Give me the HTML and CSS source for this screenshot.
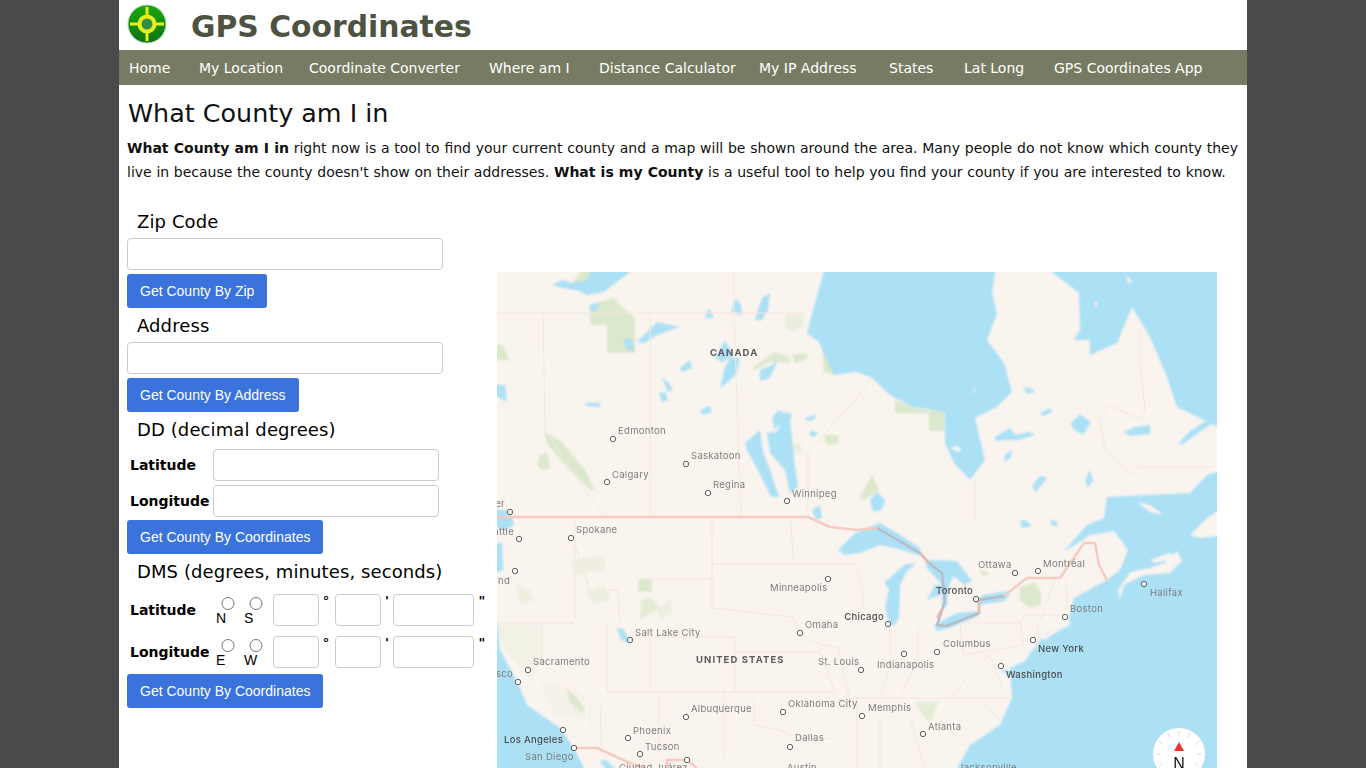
FILE: index.html
```html
<!DOCTYPE html>
<html>
<head>
    <meta charset="utf-8">
    <title>What County am I in</title>
    <link rel="stylesheet" href="styles.css">
</head>
<body>
<div class="page">
    <div class="top">
        <svg class="logo" width="40" height="40" viewBox="0 0 40 40">
            <defs>
                <linearGradient id="logo_grad" x1="0" y1="0" x2="0" y2="1">
                    <stop offset="0" stop-color="#1aa80e"/>
                    <stop offset="1" stop-color="#0a7412"/>
                </linearGradient>
            </defs>
            <circle cx="20" cy="20" r="19" fill="url(#logo_grad)" stroke="#b9d3b0" stroke-width="1"/>
            <path d="M20 3V37M3 20H37" stroke="#e8ee1c" stroke-width="3"/>
            <circle cx="20" cy="20" r="7.5" fill="#2f8f45" stroke="#e8ee1c" stroke-width="4"/>
        </svg>
        <div class="brand">GPS Coordinates</div>
    </div>
    <div class="nav">
        <a>Home</a>
        <a>My Location</a>
        <a>Coordinate Converter</a>
        <a>Where am I</a>
        <a>Distance Calculator</a>
        <a>My IP Address</a>
        <a>States</a>
        <a>Lat Long</a>
        <a>GPS Coordinates App</a>
    </div>
    <div class="content">
        <h1>What County am I in</h1>
        <p><b>What County am I in</b> right now is a tool to find your current county and a map will be shown around the area. Many people do not know which county they live in because the county doesn't show on their addresses. <b>What is my County</b> is a useful tool to help you find your county if you are interested to know.</p>
        <div class="tool">
            <div class="form">
                <div class="head">Zip Code</div>
                <input class="wide" type="text">
                <button>Get County By Zip</button>
                <div class="head">Address</div>
                <input class="wide" type="text">
                <button>Get County By Address</button>
                <div class="head">DD (decimal degrees)</div>
                <div class="dd first">
                    <b>Latitude</b>
                    <input type="text">
                </div>
                <div class="dd">
                    <b>Longitude</b>
                    <input type="text">
                </div>
                <button class="after_dd">Get County By Coordinates</button>
                <div class="head">DMS (degrees, minutes, seconds)</div>
                <div class="dms first">
                    <b>Latitude</b>
                    <label><input type="radio" name="lat">N</label>
                    <label><input type="radio" name="lat">S</label>
                    <input class="deg" type="text"><i>°</i>
                    <input class="min" type="text"><i>'</i>
                    <input class="sec" type="text"><i>"</i>
                </div>
                <div class="dms">
                    <b>Longitude</b>
                    <label><input type="radio" name="lng">E</label>
                    <label><input type="radio" name="lng">W</label>
                    <input class="deg" type="text"><i>°</i>
                    <input class="min" type="text"><i>'</i>
                    <input class="sec" type="text"><i>"</i>
                </div>
                <button class="after_dms">Get County By Coordinates</button>
            </div>
            <svg class="map" width="720" height="496" viewBox="497 272 720 496">
                <defs>
                    <filter id="soft" filterUnits="userSpaceOnUse" x="480" y="255" width="760" height="530">
                        <feGaussianBlur stdDeviation="0.8"/>
                    </filter>
                </defs>
                <rect x="497" y="272" width="720" height="496" fill="#faf4ef"/>

                <!-- parks -->
                <g fill="#dbe8cc" filter="url(#soft)">
                    <path d="M590 305L614 298L620 305L635 318V353H607V325H590Z"/>
                    <path d="M570 287L585 265H600V272L590 280L575 290Z"/>
                    <path d="M489 345H503L509 360H489Z"/>
                    <path d="M544 432L560 440L585 470L595 490L590 490L570 470L548 445Z"/>
                    <path d="M540 455L547 452L550 468L542 470L537 465Z"/>
                    <path d="M752 368L775 352L790 358L790 362L770 362L755 370Z"/>
                    <path d="M792 355L808 353L806 360L795 363Z"/>
                    <path d="M822 342L832 345L836 375L824 372Z"/>
                    <path d="M785 315L803 313L803 325L795 332L785 328Z" opacity=".5"/>
                    <path d="M782 445L800 443L802 452L787 454Z" opacity=".5"/>
                    <path d="M825 435L838 435L838 443L830 445L824 442Z"/>
                    <path d="M895 400L912 407L925 410H945V431H929V413H895Z"/>
                    <path d="M859 498L872 475L879 490L865 500Z"/>
                    <path d="M1020 587L1035 582L1041 592V605L1030 608L1020 600Z"/>
                    <path d="M978 570L990 572L986 576L982 575Z"/>
                    <path d="M638 579H652V592H638Z"/>
                    <path d="M641 600L650 597L662 610L652 612L640 620Z" opacity=".7"/>
                    <path d="M567 690L575 695L586 710L580 712L570 702Z"/>
                    <path d="M516 585L530 590L535 600L520 605Z" opacity=".4"/>
                    <path d="M585 592L605 585L610 600L595 605Z" opacity=".4"/>
                    <path d="M570 560L605 555L605 570L575 575Z" opacity=".4"/>
                    <path d="M497 625H543V660L530 680L505 650Z" opacity=".25"/>
                    <path d="M540 680L570 690L590 720L555 715Z" opacity=".2"/>
                    <path d="M658 610L670 598L672 612L660 620Z" opacity=".4"/>
                    <path d="M915 702H938L930 724L920 712Z" opacity=".7"/>
                </g>

                <!-- water -->
                <g fill="#ace0f5" filter="url(#soft)">
                    <path d="M826 265L824 272L812 313L807 333L819 342L834 375L857 372L872 378L890 395L912 407L945 412V443L954 463L970 480L985 460L975 418L997 407L1012 392L1004 363L987 340L997 313L992 293L995 272L996 265Z"/>
                    <path d="M1046 265L1052 272L1079 293L1080 330L1074 340L1090 340L1090 355L1117 343L1132 307L1150 337L1167 377L1177 407L1210 423L1225 431V265Z"/>
                    <path d="M1064 551L1087 525L1104 518L1107 497L1190 493L1207 475L1225 470V776H952L957 768L970 745L1000 725L1012 698L1010 668L1025 661L1044 635L1070 625L1069 618L1074 598L1107 580L1120 570L1128 550L1114 531L1090 535L1075 545Z"/>
                    <path d="M489 621H497L500 650L517 681L527 705L560 728L574 748L584 768L588 776H489Z"/>
                    <path d="M600 761L610 776H622L606 760Z"/>
                    <path d="M489 543H502L503 570L489 575Z"/>
                    <path d="M489 510H510L514 525L505 530L489 525Z"/>
                    <path d="M552 285L562 280L572 283L587 280L594 265H635L630 272L604 292L587 295L577 290L562 288Z"/>
                    <path d="M637 342L657 322L680 327L657 335L644 343Z"/>
                    <path d="M590 305L600 303L596 312L590 310Z"/>
                    <path d="M625 338L632 340L634 350L628 350L624 343Z"/>
                    <path d="M705 318L709 308L714 318Z"/>
                    <path d="M731 312L735 298L741 305L742 315Z"/>
                    <path d="M755 320L762 298L770 293L768 310L762 320Z"/>
                    <path d="M715 358L725 340L733 355L722 362Z"/>
                    <path d="M720 388L724 370L730 357L740 358L737 373L727 383Z"/>
                    <path d="M680 368L690 360L692 368L682 372Z"/>
                    <path d="M662 378L668 382L673 390L668 392Z"/>
                    <path d="M659 393L665 392L668 400L662 402Z"/>
                    <path d="M700 410L710 406L712 412L703 415Z"/>
                    <path d="M584 403L600 403L600 407L588 406Z"/>
                    <path d="M489 385H505L507 402L489 392Z"/>
                    <path d="M777 432L785 412L792 414L790 420L795 467L798 487L790 493L785 470L770 453L767 433Z"/>
                    <path d="M745 443L760 430L763 452L770 470L779 497L771 497L758 470L747 450Z"/>
                    <path d="M772 418L778 410L790 415L783 420L775 430Z"/>
                    <path d="M760 370L772 365L778 360L770 378L760 381Z"/>
                    <path d="M805 418L816 414L814 420L807 421Z"/>
                    <path d="M810 431L818 432L815 437L810 436Z"/>
                    <path d="M812 510L820 505L822 518L816 520Z"/>
                    <path d="M1023 388L1030 387L1035 392L1028 394Z"/>
                    <path d="M1040 413L1050 408L1052 412L1043 416Z"/>
                    <path d="M995 437L1010 428L1015 435L1030 432L1035 435L1018 440L1005 440L996 441Z"/>
                    <path d="M1005 455L1012 450L1011 458L1004 462Z"/>
                    <path d="M1070 424L1080 414L1091 422L1083 435L1075 430Z"/>
                    <path d="M1123 432L1135 427L1150 425L1150 434L1130 436Z"/>
                    <path d="M1179 443L1190 431L1206 421L1212 424L1198 433L1182 445Z"/>
                    <path d="M1085 480L1090 470L1093 480L1088 488Z"/>
                    <path d="M1032 486L1040 476L1047 478L1036 492Z"/>
                    <path d="M870 500L877 492L885 500L882 510L873 512Z"/>
                    <path d="M838 550L855 533L870 527L880 523L900 535L920 548L921 556L895 548L880 545L860 553L845 555Z"/>
                    <path d="M889 623L885 608L889 588L884 583L904 565L917 563L907 571L900 585L899 618L894 626Z"/>
                    <path d="M925 560L957 561L972 581L964 585L954 576L949 585L947 606L942 608L942 585L927 568Z"/>
                    <path d="M927 600L935 585L945 585L940 595Z"/>
                    <path d="M934 625L957 613L980 611L978 616L950 628L937 631Z"/>
                    <path d="M972 601L984 595L1007 591L1010 595L1004 601L980 605Z"/>
                    <path d="M617 628L623 629L630 640L628 643L621 640Z"/>
                    <path d="M1024 664L1032 650L1035 655L1028 670Z"/>
                    <path d="M1000 668L1008 676L1012 672Z"/>
                    <path d="M1020 521L1025 520L1032 526L1022 528Z"/>
                    <path d="M1050 521L1056 520L1058 526L1052 526Z"/>
                </g>

                <!-- islands -->
                <g fill="#faf4ef" filter="url(#soft)">
                    <path d="M1120 600L1124 585L1144 575L1170 573L1182 561L1177 551L1164 563L1150 568L1130 572L1118 590Z"/>
                    <path d="M1190 535L1205 520L1225 505V535L1200 538Z"/>
                    <path d="M1137 502L1150 505L1164 515L1150 512Z"/>
                    <path d="M1150 560L1170 553L1175 558L1155 563Z"/>
                    <path d="M1040 636L1070 624L1060 630L1044 640Z"/>
                    <path d="M950 447L958 446L962 452L955 451Z"/>
                    <path d="M1094 303L1098 301L1096 308Z"/>
                    <path d="M1126 277L1130 278L1132 284L1128 282Z"/>
                    <path d="M973 390L977 385L972 395Z"/>
                </g>

                <!-- boundaries -->
                <g fill="none" stroke="#f5e6dc" stroke-width="1">
                    <path d="M497 313H805"/>
                    <path d="M543 313L545 430L585 490L605 515"/>
                    <path d="M650 313V517"/>
                    <path d="M734 272L734 313L741 517"/>
                    <path d="M808 517V452L857 398L872 378"/>
                    <path d="M975 480V520"/>
                    <path d="M1140 467H1212"/>
                    <path d="M1140 330L1140 360L1145 410L1140 420L1110 405L1100 420L1105 450L1130 475L1145 460"/>
                    <path d="M575 518L575 620"/>
                    <path d="M575 545L590 590L618 590L620 622"/>
                    <path d="M575 623H497"/>
                    <path d="M542 623V660L590 705V725"/>
                    <path d="M607 623V692"/>
                    <path d="M639 579H712V537"/>
                    <path d="M712 518V608M712 564H790M712 608L793 617L800 635"/>
                    <path d="M639 637H735M735 637V692"/>
                    <path d="M650 637V692M607 692H814"/>
                    <path d="M659 692V755M724 692V755M600 705L602 755"/>
                    <path d="M735 652H820L835 692H814"/>
                    <path d="M754 698V725L780 730L800 738H830"/>
                    <path d="M790 564H855L863 590V610M800 635L820 644L838 648L850 700"/>
                    <path d="M790 518L794 564"/>
                    <path d="M838 700L857 698H1012"/>
                    <path d="M857 698V768M880 718V768M910 718L925 768"/>
                    <path d="M890 626V665L880 698M918 626V660L900 698"/>
                    <path d="M964 623H1020L1024 645L963 655L960 623"/>
                    <path d="M990 655L965 680L950 698M990 655L1003 690"/>
                    <path d="M1020 623L1024 615H1060M1038 622V650M1056 578L1040 620M1066 578L1067 610"/>
                    <path d="M975 697L1000 720M940 720L965 745"/>
                </g>
                <g fill="none" stroke-linejoin="round">
                    <path d="M497 517H808L830 527L857 530L877 528" stroke="#f6cbc2" stroke-width="2.5"/>
                    <path d="M877 528L920 553L929 563L942 573L945 601L937 625L947 626L979 613L979 600L1004 596" stroke="#b9bcc4" stroke-width="2.5"/>
                    <path d="M920 553L929 563M937 618L942 608M979 613L979 600" stroke="#f0b8ac" stroke-width="2"/>
                    <path d="M1004 596L1027 578L1060 578L1084 543L1095 543L1099 565L1107 580" stroke="#f6cbc2" stroke-width="2.5"/>
                    <path d="M574 748H597L630 763L644 768M667 768V760H687L697 768" stroke="#f6cbc2" stroke-width="2.5"/>
                </g>

                <!-- places -->
                <g class="dots">
                    <circle cx="613" cy="439" r="2.7"/><circle cx="686" cy="464" r="2.7"/>
                    <circle cx="607" cy="482" r="2.7"/><circle cx="708" cy="493" r="2.7"/>
                    <circle cx="787" cy="501" r="2.7"/><circle cx="510" cy="512" r="2.7"/>
                    <circle cx="519" cy="539" r="2.7"/><circle cx="571" cy="538" r="2.7"/>
                    <circle cx="515" cy="571" r="2.7"/><circle cx="828" cy="579" r="2.7"/>
                    <circle cx="800" cy="633" r="2.7"/><circle cx="630" cy="640" r="2.7"/>
                    <circle cx="528" cy="670" r="2.7"/><circle cx="518" cy="682" r="2.7"/>
                    <circle cx="861" cy="670" r="2.7"/><circle cx="686" cy="717" r="2.7"/>
                    <circle cx="783" cy="712" r="2.7"/><circle cx="790" cy="747" r="2.7"/>
                    <circle cx="628" cy="738" r="2.7"/><circle cx="640" cy="754" r="2.7"/>
                    <circle cx="563" cy="730" r="2.7"/><circle cx="574" cy="748" r="2.7"/>
                    <circle cx="687" cy="760" r="2.7"/><circle cx="888" cy="624" r="2.7"/>
                    <circle cx="976" cy="599" r="2.7"/><circle cx="1015" cy="573" r="2.7"/>
                    <circle cx="1038" cy="571" r="2.7"/><circle cx="1144" cy="584" r="2.7"/>
                    <circle cx="1065" cy="617" r="2.7"/><circle cx="1033" cy="640" r="2.7"/>
                    <circle cx="1001" cy="666" r="2.7"/><circle cx="937" cy="652" r="2.7"/>
                    <circle cx="904" cy="654" r="2.7"/><circle cx="862" cy="716" r="2.7"/>
                    <circle cx="923" cy="734" r="2.7"/>
                </g>
                <g class="place">
                    <text x="618" y="434">Edmonton</text>
                    <text x="691" y="459">Saskatoon</text>
                    <text x="612" y="478">Calgary</text>
                    <text x="713" y="488">Regina</text>
                    <text x="792" y="497">Winnipeg</text>
                    <text x="505" y="507" text-anchor="end">Vancouver</text>
                    <text x="514" y="535" text-anchor="end">Seattle</text>
                    <text x="576" y="533">Spokane</text>
                    <text x="510" y="584" text-anchor="end">Portland</text>
                    <text x="770" y="591">Minneapolis</text>
                    <text x="805" y="628">Omaha</text>
                    <text x="635" y="636">Salt Lake City</text>
                    <text x="533" y="665">Sacramento</text>
                    <text x="513" y="677" text-anchor="end">San Francisco</text>
                    <text x="818" y="665">St. Louis</text>
                    <text x="691" y="712">Albuquerque</text>
                    <text x="788" y="707">Oklahoma City</text>
                    <text x="795" y="741">Dallas</text>
                    <text x="633" y="734">Phoenix</text>
                    <text x="645" y="750">Tucson</text>
                    <text x="525" y="760">San Diego</text>
                    <text x="619" y="771">Ciudad Juárez</text>
                    <text x="787" y="771">Austin</text>
                    <text x="978" y="568">Ottawa</text>
                    <text x="1043" y="567">Montréal</text>
                    <text x="1150" y="596">Halifax</text>
                    <text x="1070" y="612">Boston</text>
                    <text x="943" y="647">Columbus</text>
                    <text x="877" y="668">Indianapolis</text>
                    <text x="868" y="711">Memphis</text>
                    <text x="928" y="730">Atlanta</text>
                    <text x="958" y="771">Jacksonville</text>
                </g>
                <g class="place major">
                    <text x="504" y="743">Los Angeles</text>
                    <text x="884" y="620" text-anchor="end">Chicago</text>
                    <text x="936" y="594">Toronto</text>
                    <text x="1038" y="652">New York</text>
                    <text x="1006" y="678">Washington</text>
                </g>
                <g class="country">
                    <text x="710" y="356">CANADA</text>
                    <text x="696" y="663">UNITED STATES</text>
                </g>

                <!-- compass -->
                <circle cx="1179" cy="754" r="26" fill="#fff"/>
                <g stroke="#ddd" stroke-width="1">
                    <path d="M1179 731V736M1168 733L1170 738M1190 733L1188 738M1159 741L1163 745M1199 741L1195 745M1156 754H1161M1197 754H1202M1159 767L1163 763M1199 767L1195 763"/>
                </g>
                <path d="M1179 742L1184 751H1174Z" fill="#f0352c"/>
                <text class="north" x="1179" y="769">N</text>
            </svg>
        </div>
    </div>
</div>
</body>
</html>
```

FILE: styles.css
```css
html, body {
    margin: 0;
    padding: 0;
    height: 768px;
    overflow: hidden;
}
body {
    background-color: #4a4a4a;
    font-family: "DejaVu Sans", Verdana, sans-serif;
    color: #000;
}
.page {
    width: 1128px;
    height: 768px;
    margin-left: 119px;
    background-color: #fff;
    overflow: hidden;
}
.top {
    display: flex;
    align-items: center;
    height: 50px;
}
.logo {
    margin-left: 8px;
    margin-top: -2px;
}
.brand {
    margin-left: 24px;
    font-size: 29.8px;
    font-weight: bold;
    color: #4d5340;
    margin-top: 3px;
}
.nav {
    display: flex;
    align-items: center;
    height: 35px;
    background-color: #777b63;
    padding-left: 10px;
    font-size: 14px;
    color: #fff;
}
.nav a {
    display: block;
    white-space: nowrap;
}
.nav a:nth-child(1) { width: 70px; }
.nav a:nth-child(2) { width: 110px; }
.nav a:nth-child(3) { width: 180px; }
.nav a:nth-child(4) { width: 110px; }
.nav a:nth-child(5) { width: 160px; }
.nav a:nth-child(6) { width: 130px; }
.nav a:nth-child(7) { width: 75px; }
.nav a:nth-child(8) { width: 90px; }
.content {
    padding: 0 9px 0 8px;
}
h1 {
    margin: 12px 0 0 1px;
    height: 32px;
    line-height: 32px;
    font-size: 25.4px;
    font-weight: normal;
    color: #111;
}
p {
    margin: 7px 0 0 0;
    font-size: 14px;
    line-height: 24px;
    text-align: justify;
    word-spacing: .25px;
    color: #111;
}
.tool {
    display: flex;
    margin-top: 24px;
}
.form {
    display: flex;
    flex-direction: column;
    align-items: flex-start;
    gap: 4px;
    width: 370px;
    flex: none;
}
.map {
    display: block;
    flex: none;
    margin-top: 64px;
}
.head {
    height: 26px;
    line-height: 28px;
    padding-left: 10px;
    font-size: 18px;
    letter-spacing: .1px;
    white-space: nowrap;
}
input[type=text] {
    box-sizing: border-box;
    height: 32px;
    margin: 0;
    padding: 0 6px;
    background: #fff;
    border: 1px solid #ccc;
    border-radius: 4px;
}
.wide {
    width: 316px;
}
button {
    height: 34px;
    padding: 0 13px;
    border: 0;
    border-radius: 3px;
    background-color: #3b73dd;
    color: #fff;
    font-family: "Liberation Sans", Arial, sans-serif;
    font-size: 14px;
}
.after_dd {
    margin-top: -1px;
}
.after_dms {
    margin-top: 2px;
}
.dd {
    display: flex;
    align-items: center;
    font-size: 14px;
}
.dd.first {
    margin-top: 3px;
}
.dd b {
    width: 83px;
    padding-left: 3px;
}
.dd input {
    width: 226px;
}
.dms {
    display: flex;
    align-items: center;
    height: 32px;
    font-size: 14px;
    margin-top: 6px;
}
.dms.first {
    margin-top: 6px;
}
.dms b {
    width: 83px;
    padding-left: 3px;
    flex: none;
}
.dms label {
    display: flex;
    flex-direction: column;
    width: 28px;
    flex: none;
    padding-left: 3px;
    box-sizing: border-box;
    font-family: "Liberation Sans", Arial, sans-serif;
    font-size: 14px;
    line-height: 16px;
}
.dms label input {
    margin: 2px 0 0 -1px;
}
.dms label:nth-of-type(2) {
    margin-right: 4px;
}
.dms i {
    align-self: flex-start;
    font-style: normal;
    font-weight: bold;
    font-size: 13px;
    line-height: 14px;
    text-align: center;
}
.deg, .min {
    width: 46px;
}
.sec {
    width: 81px;
}
.dms i:nth-of-type(1) {
    width: 14px;
}
.dms i:nth-of-type(2) {
    width: 12px;
}
.dms i:nth-of-type(3) {
    width: 16px;
}
.dms .min {
    margin-left: 2px;
}
.dots circle {
    fill: #fff;
    stroke: #5f5f5f;
    stroke-width: 1;
}
.place text {
    font-family: Inter, "Liberation Sans", sans-serif;
    font-size: 9.5px;
    letter-spacing: .3px;
    fill: #7d7d7d;
}
.place.major text {
    fill: #4c4c4c;
    font-weight: 500;
}
.country text {
    font-family: Inter, "Liberation Sans", sans-serif;
    font-size: 9.5px;
    font-weight: 700;
    letter-spacing: 1.1px;
    fill: #5c5c5c;
}
.north {
    font-family: "Liberation Sans", Arial, sans-serif;
    font-size: 16px;
    text-anchor: middle;
    fill: #111;
}
```
